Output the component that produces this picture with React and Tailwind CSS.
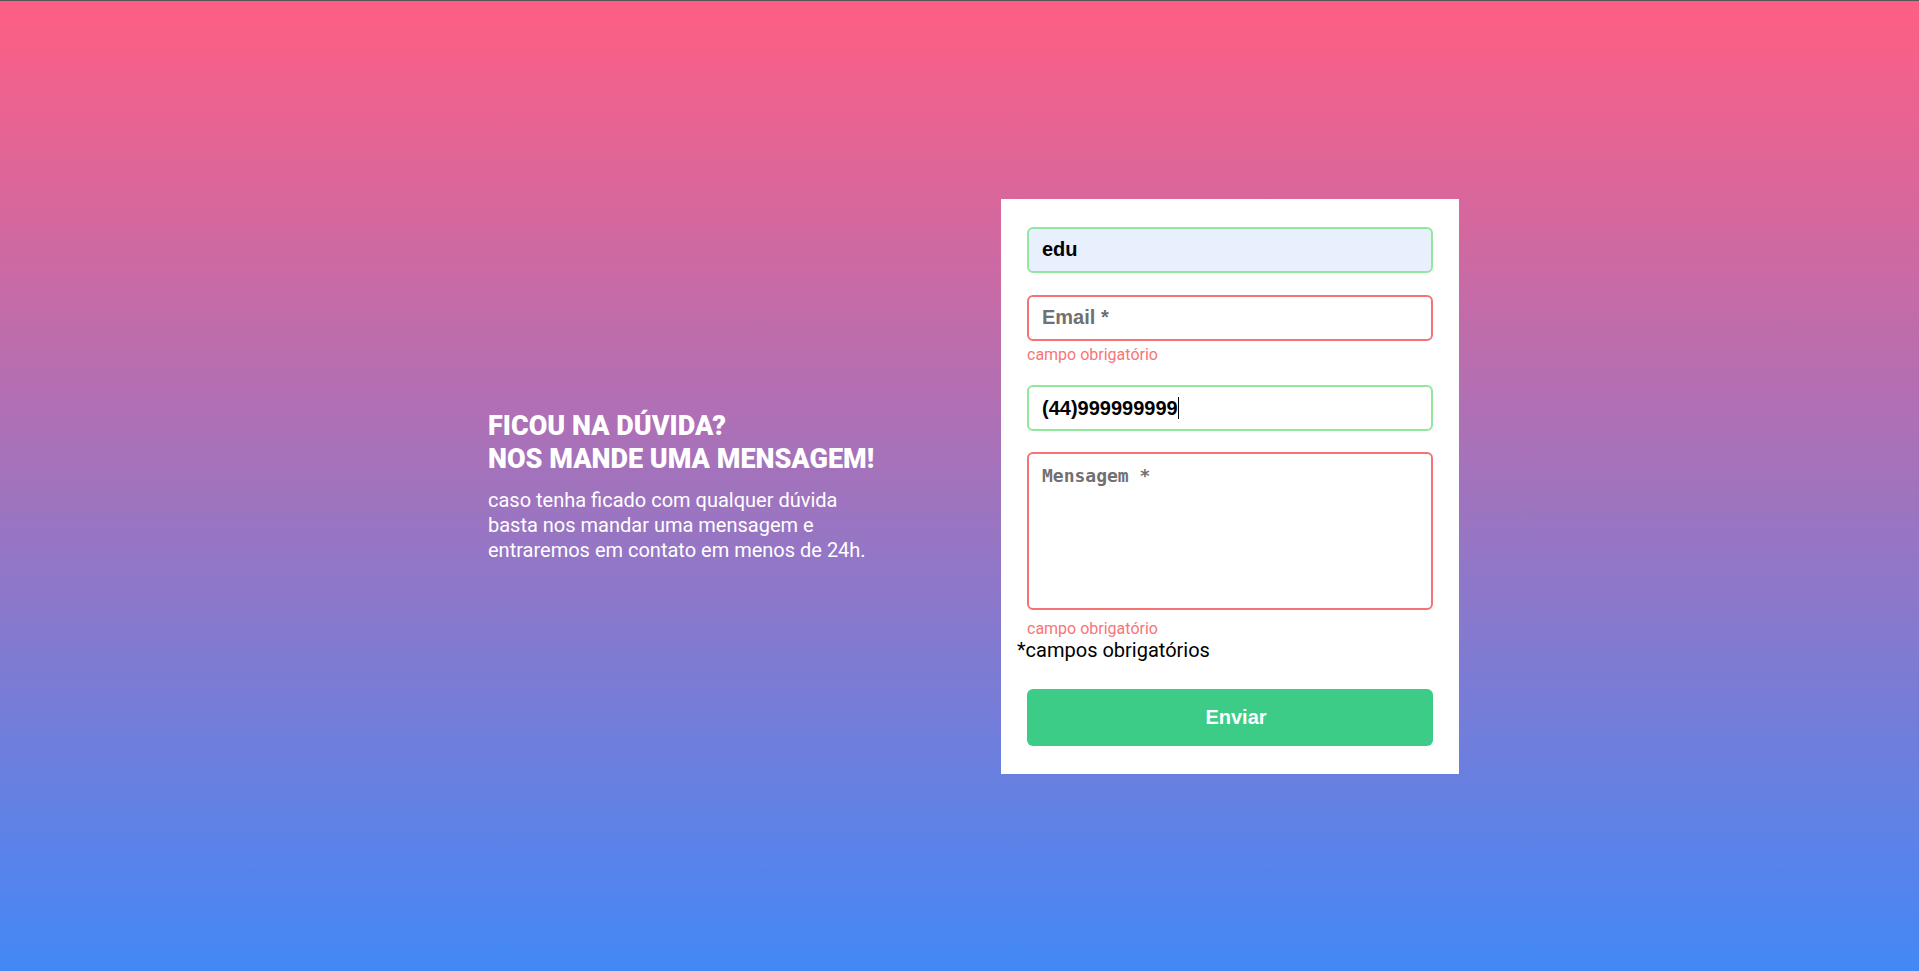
import React, { useState } from 'react';

const App = () => {
  const [name] = useState('edu');
  const [phone] = useState('(44)999999999');

  return (
    <div className="h-screen border-t border-[#555] bg-[linear-gradient(to_bottom,#ff5e84,#4388f7)] flex items-center justify-center font-['Roboto',sans-serif]">
      <div className="flex items-center gap-[28px]">
        <div className="w-[513px] pl-[28px] text-white">
          <h1 className="text-[27px] leading-[33px] font-black uppercase whitespace-nowrap">
            Ficou na dúvida?
            <br />
            Nos mande uma mensagem!
          </h1>
          <p className="mt-[12px] text-[20px] leading-[25px] whitespace-nowrap">
            caso tenha ficado com qualquer dúvida
            <br />
            basta nos mandar uma mensagem e
            <br />
            entraremos em contato em menos de 24h.
          </p>
        </div>

        <form className="w-[458px] bg-white px-[16px] pt-[28px] pb-[28px] flex flex-col" onSubmit={(e) => e.preventDefault()}>
          <input
            readOnly
            value={name}
            className="mx-[10px] h-[46px] px-[13px] rounded-[6px] border-2 border-[#90e89c] bg-[#e8f0fe] text-black text-[20px] font-bold font-['Liberation_Sans',Arial,sans-serif] outline-none"
          />
          <input
            readOnly
            placeholder="Email *"
            className="mx-[10px] mt-[22px] h-[46px] px-[13px] rounded-[6px] border-2 border-[#f77373] bg-white text-[20px] font-bold font-['Liberation_Sans',Arial,sans-serif] placeholder:text-[#707070] outline-none"
          />
          <span className="mx-[10px] mt-[4px] text-[16px] leading-[19px] text-[#f87575]">campo obrigatório</span>
          <div className="mx-[10px] mt-[21px] h-[46px] px-[13px] rounded-[6px] border-2 border-[#90e89c] bg-white flex items-center">
            <input
              readOnly
              value={phone}
              size={13}
              className="w-[136px] bg-transparent text-black text-[20px] font-bold font-['Liberation_Sans',Arial,sans-serif] outline-none"
            />
            <span className="w-px h-[22px] bg-black" />
          </div>
          <textarea
            readOnly
            placeholder="Mensagem *"
            className="mx-[10px] mt-[21px] h-[158px] px-[13px] pt-[8px] rounded-[6px] border-2 border-[#f77373] bg-white text-[18px] font-bold font-['DejaVu_Sans_Mono',monospace] placeholder:text-[#707070] resize-none outline-none block"
          />
          <span className="mx-[10px] mt-[9px] text-[16px] leading-[19px] text-[#f87575]">campo obrigatório</span>
          <span className="text-[20px] leading-[24px] text-black">*campos obrigatórios</span>
          <button
            type="submit"
            className="mx-[10px] mt-[27px] h-[57px] pl-[12px] rounded-[6px] bg-[#3dcc87] text-white text-[20px] font-bold font-['Liberation_Sans',Arial,sans-serif]"
          >
            Enviar
          </button>
        </form>
      </div>
    </div>
  );
};

export default App;
